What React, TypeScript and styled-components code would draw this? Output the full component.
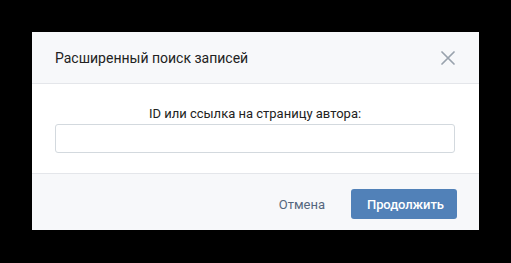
import React from "react";
import styled, { createGlobalStyle } from "styled-components";

const GlobalStyle = createGlobalStyle`
  html, body {
    margin: 0;
    padding: 0;
    background: #000000;
  }
  body {
    font-family: Roboto, "Liberation Sans", Arial, sans-serif;
    -webkit-font-smoothing: antialiased;
  }
`;

const Page = styled.div`
  padding: 32px 0 0 32px;
  width: 479px;
`;

const Dialog = styled.div`
  width: 447px;
  background: #ffffff;
  display: flex;
  flex-direction: column;
`;

const Header = styled.div`
  height: 51px;
  display: flex;
  align-items: center;
  justify-content: space-between;
  padding: 0 24px 0 23px;
  background: #f7f8fa;
  border-bottom: 1px solid #e4e6ea;
`;

const Title = styled.div`
  font-size: 14px;
  color: #222222;
  padding-top: 1px;
`;

const CloseButton = styled.button`
  width: 14px;
  height: 14px;
  padding: 0;
  border: none;
  background: none;
  display: flex;
  cursor: pointer;
`;

const Body = styled.div`
  padding: 22px 24px 20px 23px;
  display: flex;
  flex-direction: column;
  gap: 2px;
  border-bottom: 1px solid #e4e6ea;
`;

const Label = styled.label`
  font-size: 13px;
  line-height: 16px;
  color: #222222;
  text-align: center;
`;

const Field = styled.input`
  height: 29px;
  box-sizing: border-box;
  width: 100%;
  border: 1px solid #d3d9de;
  border-radius: 3px;
  outline: none;
  padding: 0 9px;
  font-family: inherit;
  font-size: 13px;
`;

const Footer = styled.div`
  height: 56px;
  box-sizing: border-box;
  padding: 15px 22px 11px;
  background: #f7f8fa;
  display: flex;
  justify-content: flex-end;
  align-items: flex-start;
  gap: 10px;
`;

const Button = styled.button<{ $primary?: boolean }>`
  height: 30px;
  padding: 0 16px;
  border: none;
  border-radius: 3px;
  font-family: inherit;
  font-size: 13px;
  letter-spacing: ${({ $primary }) => ($primary ? "-0.1px" : "0")};
  font-weight: ${({ $primary }) => ($primary ? 500 : 400)};
  background: ${({ $primary }) => ($primary ? "#5181b8" : "transparent")};
  color: ${({ $primary }) => ($primary ? "#ffffff" : "#55677d")};
  width: ${({ $primary }) => ($primary ? "106px" : "auto")};
  cursor: pointer;
`;

export default function App() {
  return (
    <Page>
      <GlobalStyle />
      <Dialog>
        <Header>
          <Title>Расширенный поиск записей</Title>
          <CloseButton aria-label="Закрыть">
            <svg width="14" height="14" viewBox="0 0 14 14">
              <path
                d="M1 1L13 13M13 1L1 13"
                stroke="#99a2ad"
                strokeWidth="1.7"
                strokeLinecap="round"
              />
            </svg>
          </CloseButton>
        </Header>
        <Body>
          <Label>ID или ссылка на страницу автора:</Label>
          <Field type="text" />
        </Body>
        <Footer>
          <Button>Отмена</Button>
          <Button $primary>Продолжить</Button>
        </Footer>
      </Dialog>
    </Page>
  );
}
